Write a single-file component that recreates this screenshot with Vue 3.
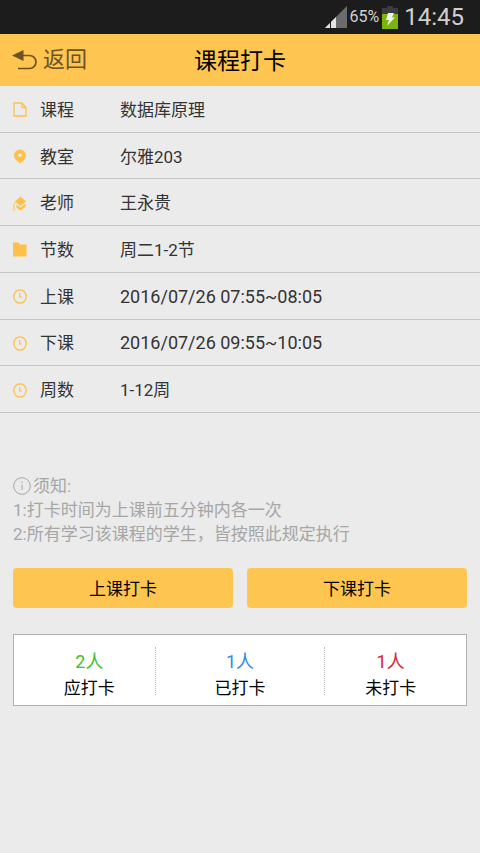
<script setup>
const rows = [
  { icon: 'file', label: '课程', value: '数据库原理' },
  { icon: 'pin', label: '教室', value: '尔雅203' },
  { icon: 'cap', label: '老师', value: '王永贵' },
  { icon: 'folder', label: '节数', value: '周二1-2节' },
  { icon: 'clock', label: '上课', value: '2016/07/26 07:55~08:05', numeric: true },
  { icon: 'clock', label: '下课', value: '2016/07/26 09:55~10:05', numeric: true },
  { icon: 'clock', label: '周数', value: '1-12周' }
]

const stats = [
  { kind: 'due', count: '2人', label: '应打卡' },
  { kind: 'done', count: '1人', label: '已打卡' },
  { kind: 'missed', count: '1人', label: '未打卡' }
]
</script>

<template>
  <div class="screen">
    <div class="status">
      <svg class="signal" viewBox="0 0 22 22" aria-hidden="true">
        <path d="M22 0V22H0Z" fill="#6c6c6c" />
        <path d="M11 11V22H0Z" fill="#e4e4e4" />
        <path d="M5.500 15V22" stroke="#1c1c1c" stroke-width="1" />
      </svg>
      <span class="percent">65%</span>
      <svg class="battery" viewBox="0 0 16 23" aria-hidden="true">
        <path d="M5 0H11V2H16V8H0V2H5Z" fill="#3b3b40" />
        <path d="M0 8H16V23H0Z" fill="#79b50c" />
        <path d="M6 7H12L10 11.500H13L5 20L7 14H4Z" fill="#f0f0f0" />
      </svg>
      <span class="time">14:45</span>
    </div>

    <header class="bar">
      <a class="back" href="#">
        <svg class="back-icon" viewBox="0 0 26 20" aria-hidden="true">
          <path d="M0 5.500L11.500 0V11Z" fill="#6b5324" />
          <path d="M9 5.500H17.500A6.500 6.500 0 0 1 17.500 18.500H6" fill="none" stroke="#6b5324" stroke-width="1.700" />
        </svg>
        <span>返回</span>
      </a>
      <h1 class="title">课程打卡</h1>
    </header>

    <main>
      <dl class="details">
        <div v-for="row in rows" :key="row.label" class="row">
          <dt class="label">
            <svg class="icon" viewBox="0 0 14 15" aria-hidden="true">
              <path v-if="row.icon === 'file'" d="M1 1H9L13 5.500V14H1ZM9 1V5.500H13" fill="none" stroke="currentColor" stroke-width="1.300" />
              <path v-else-if="row.icon === 'pin'" fill="currentColor" fill-rule="evenodd" d="M7 0.500A6 6 0 0 1 13 6.500C13 9.500 10 12 7 14.500C4 12 1 9.500 1 6.500A6 6 0 0 1 7 0.500ZM7 4.500A1.800 1.800 0 1 0 7 8.100A1.800 1.800 0 1 0 7 4.500Z" />
              <template v-else-if="row.icon === 'cap'">
                <path d="M7.500 0.500L13 5.500L7.500 10L2 5.500Z" fill="currentColor" />
                <path d="M3.500 8.500L7.500 11.500L12.500 7.500V11L7.500 14.500L3.500 11.500Z" fill="currentColor" />
                <path d="M2.500 6L1 8V15" fill="none" stroke="currentColor" />
              </template>
              <path v-else-if="row.icon === 'folder'" d="M0 0.500H5.500L7 2.500H13.500V14.500H0Z" fill="currentColor" />
              <template v-else>
                <ellipse cx="7" cy="7.500" rx="6.200" ry="6.700" fill="none" stroke="currentColor" stroke-width="1.300" />
                <path d="M6.700 4V8H9" fill="none" stroke="currentColor" stroke-width="1.200" />
              </template>
            </svg>
            <span>{{ row.label }}</span>
          </dt>
          <dd class="value" :class="{ numeric: row.numeric }">{{ row.value }}</dd>
        </div>
      </dl>

      <section class="notice">
        <p class="notice-head">
          <svg class="info" viewBox="0 0 18 18" aria-hidden="true">
            <circle cx="9" cy="9" r="8.300" fill="none" stroke="currentColor" />
            <path d="M9 7.500V13M9 4.500V6" stroke="currentColor" />
          </svg>
          <span>须知:</span>
        </p>
        <p>1:打卡时间为上课前五分钟内各一次</p>
        <p>2:所有学习该课程的学生，皆按照此规定执行</p>
      </section>

      <div class="actions">
        <button type="button">上课打卡</button>
        <button type="button">下课打卡</button>
      </div>

      <section class="stats">
        <div v-for="stat in stats" :key="stat.kind" class="stat" :class="stat.kind">
          <span class="count">{{ stat.count }}</span>
          <span class="caption">{{ stat.label }}</span>
        </div>
      </section>
    </main>
  </div>
</template>

<style>
body {
  background: #ebebeb;
}
</style>

<style scoped>
.screen {
  min-height: 100vh;
  background: #ebebeb;
  color: #333;
  font-family: Roboto, "Noto Sans CJK SC", sans-serif;
  font-size: 17px;
  line-height: 24px;
}

.status {
  display: flex;
  align-items: center;
  justify-content: flex-end;
  height: 34px;
  padding-right: 16px;
  box-sizing: border-box;
  background: #1c1c1c;
  color: #d0d0d0;
}

.signal {
  width: 22px;
  height: 22px;
  margin-right: 3px;
}

.percent {
  font-size: 16px;
  margin-right: 3px;
}

.battery {
  width: 16px;
  height: 23px;
  margin-right: 6px;
}

.time {
  font-size: 24px;
}

.bar {
  display: grid;
  grid-template-columns: 1fr auto 1fr;
  align-items: center;
  height: 52px;
  padding: 0 12px;
  background: #ffc551;
}

.back {
  display: flex;
  align-items: center;
  gap: 5px;
  color: #6b5324;
  font-size: 22px;
  text-decoration: none;
}

.back-icon {
  width: 26px;
  height: 20px;
}

.title {
  margin: 0;
  padding-top: 4px;
  color: #000;
  font-size: 23px;
  font-weight: 400;
}

.details {
  display: grid;
  grid-auto-rows: 1fr;
  height: 327px;
  margin: 0;
}

.row {
  display: flex;
  align-items: center;
  padding: 2px 13px 0;
  border-bottom: 1px solid #c6c6c6;
}

.label {
  display: flex;
  align-items: center;
  gap: 13px;
  width: 107px;
}

.icon {
  width: 14px;
  height: 15px;
  color: #ffc04a;
}

.value {
  margin: 0;
}

.numeric {
  font-size: 18px;
}

.notice {
  padding: 61px 13px 0;
  color: #a6a6a6;
}

.notice p {
  margin: 0;
}

.notice-head {
  display: flex;
  align-items: center;
  gap: 2px;
}

.info {
  width: 18px;
  height: 18px;
}

.actions {
  display: grid;
  grid-template-columns: 1fr 1fr;
  gap: 14px;
  padding: 22px 13px 0;
}

.actions button {
  height: 40px;
  padding: 2px 0 0;
  border: 0;
  border-radius: 4px;
  background: #ffc551;
  color: #000;
  font: inherit;
}

.stats {
  display: grid;
  grid-template-columns: repeat(3, 1fr);
  margin: 26px 13px 0;
  padding: 12px 0 10px;
  border: 1px solid #b0b0b0;
  background: #fff;
  color: #000;
}

.stat {
  display: flex;
  flex-direction: column;
  align-items: center;
  gap: 9px;
  padding-top: 5px;
}

.count {
  font-size: 18px;
  line-height: 20px;
}

.caption {
  line-height: 14px;
}

.done {
  margin: 0 -10px;
  border: dotted #b4b4b4;
  border-width: 0 1px;
}

.due .count {
  color: #3cc12c;
}

.done .count {
  color: #2a8bea;
}

.missed .count {
  color: #e0202c;
}
</style>
